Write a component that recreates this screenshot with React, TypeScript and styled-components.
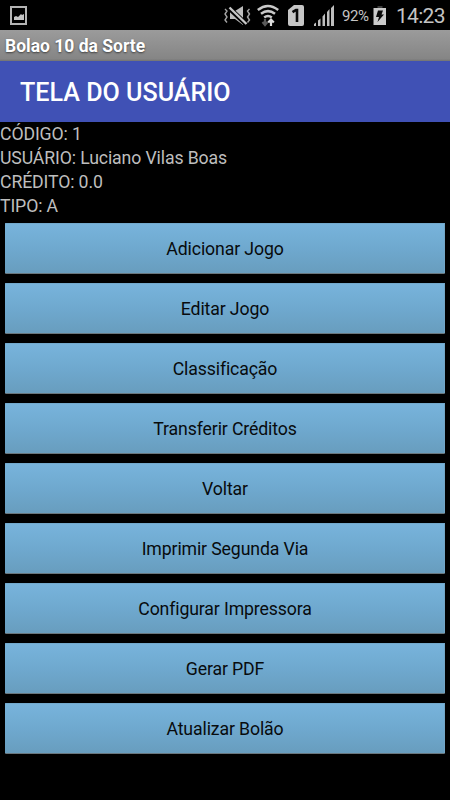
import React from "react";
import styled, { createGlobalStyle } from "styled-components";

const GlobalStyle = createGlobalStyle`
  * { box-sizing: border-box; }
  body { margin: 0; background: #000; font-family: Roboto, sans-serif; }
`;

const Screen = styled.main`
  width: 450px;
  height: 800px;
  display: flex;
  flex-direction: column;
  overflow: hidden;
  background: #000;
`;

const StatusBar = styled.header`
  height: 30px;
  flex: none;
  display: flex;
  align-items: center;
  padding: 0 5px 0 9px;
  color: #c4c4c4;
`;

const Icon = styled.svg<{ $gap?: number }>`
  display: block;
  flex: none;
  margin-left: ${(p) => p.$gap ?? 0}px;
`;

const Spacer = styled.div`
  flex: 1;
`;

const Percent = styled.span`
  width: 28px;
  margin: 2px 0 0 7px;
  font-size: 15px;
  line-height: 20px;
  letter-spacing: -0.4px;
  white-space: nowrap;
`;

const Clock = styled.time`
  width: 49px;
  margin: 2px 0 0 9px;
  font-size: 21px;
  line-height: 24px;
  letter-spacing: -0.7px;
  white-space: nowrap;
`;

const WindowTitle = styled.div`
  height: 31px;
  flex: none;
  padding: 1px 5px 0;
  background: linear-gradient(#9b9b9b, #858585 94%, #777 97%, #777);
  color: #fff;
  font-size: 17.5px;
  font-weight: 700;
  line-height: 30px;
  text-shadow: 0 1px 2px rgba(0, 0, 0, 0.55);
`;

const Heading = styled.h1`
  height: 61px;
  flex: none;
  margin: 0;
  padding: 1px 20px 0;
  background: #4051b5;
  color: #fff;
  font-size: 25.1px;
  font-weight: 500;
  line-height: 61px;
`;

const UserInfo = styled.section`
  flex: none;
  height: 96px;
  color: #bebebe;
  font-size: 17.7px;
  line-height: 24px;
  letter-spacing: -0.13px;
`;

const InfoLine = styled.div`
  height: 24px;
`;

const Menu = styled.nav`
  display: flex;
  flex-direction: column;
  gap: 9px;
  padding: 5px;
`;

const MenuButton = styled.button`
  height: 51px;
  flex: none;
  border: 0;
  border-bottom: 1px solid #69777e;
  padding: 2px 0 0;
  border-radius: 1px;
  background: linear-gradient(#78b4dc, #6fa9cf 50%, #689dbe);
  box-shadow: inset 0 1px 0 #72a9cc, inset -1px 0 0 #72a5c5;
  color: #080b0d;
  font: 400 17.7px / 24px Roboto, sans-serif;
  letter-spacing: -0.13px;
`;

const user = ["CÓDIGO: 1", "USUÁRIO: Luciano Vilas Boas", "CRÉDITO: 0.0", "TIPO: A"];

const actions = [
  "Adicionar Jogo",
  "Editar Jogo",
  "Classificação",
  "Transferir Créditos",
  "Voltar",
  "Imprimir Segunda Via",
  "Configurar Impressora",
  "Gerar PDF",
  "Atualizar Bolão",
];

const PictureIcon = () => (
  <Icon width="19" height="30" viewBox="0 0 19 30">
    <rect x="2" y="7" width="15" height="17" fill="none" stroke="#b4b4b4" strokeWidth="2" />
    <path d="M5 20v-3l2-1 2 1 3-3 1 1 2-1v6z" fill="#c4c4c4" />
  </Icon>
);

const MutedIcon = () => (
  <Icon width="29" height="30" viewBox="0 0 29 30">
    <path d="M7 11h5l8-5v19l-8-6H7z" fill="#bdbdbd" />
    <path d="M5 7l18 17" stroke="#000" strokeWidth="5" />
    <path d="M6.5 7.5l17 16.5" stroke="#c8c8c8" strokeWidth="2.4" />
    <path
      d="M2 9l2 2-2 3 2 3-2 3 2 2.5M26.5 9l-2 2 2 3-2 3 2 3-2 2.5"
      fill="none"
      stroke="#a4a4a4"
      strokeWidth="1.4"
    />
  </Icon>
);

const WifiIcon = () => (
  <Icon $gap={5} width="22" height="30" viewBox="0 0 22 30">
    <g fill="none" stroke="#c8c8c8" strokeWidth="2.5">
      <path d="M.8 10q10-8 20.4 0" />
      <path d="M4 13.8q7-5.3 14 0" />
      <path d="M7.2 17.5q3.8-3 7.6 0" />
    </g>
    <path d="M8 19v6M5.5 22l2.5 3 2.5-3" fill="none" stroke="#5a5a5a" strokeWidth="2.2" />
    <path d="M14 26v-6M11.2 22.5L14 19.5l2.8 3" fill="none" stroke="#dedede" strokeWidth="2.2" />
  </Icon>
);

const SimIcon = () => (
  <Icon $gap={9} width="17" height="30" viewBox="0 0 17 30">
    <path d="M6 5h8q2 0 2 2v17q0 2-2 2H2q-2 0-2-2V10z" fill="#c6c6c6" />
    <path d="M4.5 12.2l3.5-2.2h1v12" fill="none" stroke="#080808" strokeWidth="2.6" />
  </Icon>
);

const SignalIcon = () => (
  <Icon $gap={8} width="22" height="30" viewBox="0 0 22 30">
    <path
      d="M1 24l2-1.5V26H1zM5 20.5l2.5-2V26H5zM9.5 16.5l2.5-3V26H9.500zM14 12l2.5-3V26H14zM18 8l3-3v21h-3z"
      fill="#bebebe"
    />
  </Icon>
);

const BatteryIcon = () => (
  <Icon $gap={3} width="14" height="30" viewBox="0 0 14 30">
    <path d="M4.5 6h5v2h-5z" fill="#3e3e3e" />
    <path d="M.5 8h12.5v17H.5z" fill="#cacaca" />
    <path d="M5 10.5h5L8.5 14.500H11l-6.5 7.5L6 17H3z" fill="#080808" />
  </Icon>
);

export default function App() {
  return (
    <>
      <GlobalStyle />
      <Screen>
        <StatusBar>
          <PictureIcon />
          <Spacer />
          <MutedIcon />
          <WifiIcon />
          <SimIcon />
          <SignalIcon />
          <Percent>92%</Percent>
          <BatteryIcon />
          <Clock>14:23</Clock>
        </StatusBar>
        <WindowTitle>Bolao 10 da Sorte</WindowTitle>
        <Heading>TELA DO USUÁRIO</Heading>
        <UserInfo>
          {user.map((line) => (
            <InfoLine key={line}>{line}</InfoLine>
          ))}
        </UserInfo>
        <Menu>
          {actions.map((label) => (
            <MenuButton key={label}>{label}</MenuButton>
          ))}
        </Menu>
      </Screen>
    </>
  );
}
